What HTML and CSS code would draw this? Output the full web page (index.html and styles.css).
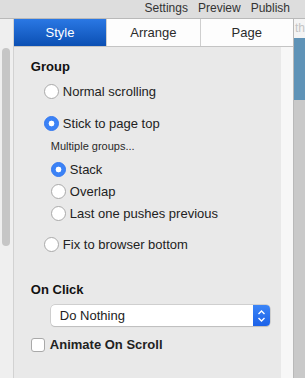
FILE: index.html
```html
<!DOCTYPE html>
<html lang="en">
<head>
  <meta charset="UTF-8">
  <title>Inspector</title>
  <link rel="stylesheet" href="styles.css">
</head>
<body>
  <div class="topbar">
    <span>Settings</span>
    <span>Preview</span>
    <span>Publish</span>
  </div>

  <div class="main">
    <div class="gutter">
      <div class="thumb"></div>
    </div>

    <div class="inspector">
      <div class="tabs">
        <div class="tab active">Style</div>
        <div class="tab">Arrange</div>
        <div class="tab">Page</div>
      </div>

      <div class="body">
        <div class="panel">
          <h2>Group</h2>
          <label class="radio"><span class="dot"></span>Normal scrolling</label>
          <label class="radio sticky"><span class="dot on"></span>Stick to page top</label>

          <div class="sub">
            <div class="hint">Multiple groups...</div>
            <label class="radio tight"><span class="dot on"></span>Stack</label>
            <label class="radio tight"><span class="dot"></span>Overlap</label>
            <label class="radio tight"><span class="dot"></span>Last one pushes previous</label>
          </div>

          <label class="radio bottom"><span class="dot"></span>Fix to browser bottom</label>

          <h2 class="onclick">On Click</h2>
          <div class="select">
            <span>Do Nothing</span>
            <span class="stepper">
              <svg width="9" height="14" viewBox="0 0 9 14">
                <path d="M1.5 5 L4.5 2 L7.5 5 M1.5 9 L4.5 12 L7.5 9" fill="none" stroke="#fff" stroke-width="1.4"/>
              </svg>
            </span>
          </div>

          <label class="check"><span class="box"></span>Animate On Scroll</label>
        </div>
        <div class="strip"></div>
      </div>
    </div>

    <div class="outside">
      <div class="peek">th</div>
      <div class="blue"></div>
      <div class="grey"></div>
    </div>
  </div>
</body>
</html>
```

FILE: styles.css
```css
* {
  margin: 0;
  padding: 0;
  box-sizing: border-box;
}

body {
  width: 305px;
  height: 378px;
  overflow: hidden;
  font-family: "Liberation Sans", Arial, sans-serif;
  font-size: 13px;
  color: #1e1e1e;
  background: #e9e9e9;
}

.topbar {
  height: 19px;
  background: #dddddd;
  border-bottom: 1px solid #b9b9b9;
  display: flex;
  justify-content: flex-end;
  gap: 10px;
  padding-right: 15px;
  font-size: 12px;
  line-height: 17px;
  color: #333;
}

.main {
  display: flex;
  height: 359px;
}

.gutter {
  width: 14px;
  background: #efefef;
  border-right: 1px solid #d2d2d2;
  padding: 29px 0 0 2px;
}

.thumb {
  width: 8px;
  height: 198px;
  background: #c6c6c6;
  border-radius: 4px;
}

.inspector {
  width: 284px;
  display: flex;
  flex-direction: column;
  border-right: 1px solid #b9b9b9;
}

.tabs {
  display: flex;
  height: 28px;
  border-bottom: 1px solid #c4c4c4;
  background: #fdfdfd;
}

.tab {
  flex: 1;
  text-align: center;
  line-height: 27px;
  color: #2b2b2b;
  border-left: 1px solid #cfcfcf;
}

.tab:first-child {
  border-left: none;
}

.tab.active {
  background: linear-gradient(#2a78e4, #0b4fb3);
  color: #fff;
}

.body {
  flex: 1;
  display: flex;
}

.panel {
  flex: 1;
  background: #e9e9e9;
  padding: 12px 0 0 17px;
}

.strip {
  width: 12px;
  background: #f7f7f7;
}

h2 {
  font-size: 13px;
  font-weight: bold;
  color: #111;
  line-height: 16px;
}

.radio {
  display: flex;
  align-items: center;
  gap: 4px;
  height: 20px;
  margin: 6px 0 0 13px;
  color: #222;
}

.dot {
  width: 15px;
  height: 15px;
  border-radius: 50%;
  background: #fff;
  border: 1px solid #a9a9a9;
  display: inline-block;
}

.dot.on {
  background: #3b82f6 radial-gradient(circle, #fff 2.6px, transparent 3.2px);
  border-color: #3478f0;
}

.radio.sticky {
  margin-top: 12px;
}

.sub {
  padding-left: 20px;
  margin-top: 6px;
}

.hint {
  font-size: 11px;
  color: #2a2a2a;
  line-height: 14px;
}

.radio.tight {
  margin: 2px 0 0 0;
  height: 20px;
}

.sub .radio.tight:first-of-type {
  margin-top: 6px;
}

.radio.bottom {
  margin-top: 11px;
}

.onclick {
  margin-top: 28px;
}

.select {
  display: flex;
  align-items: center;
  justify-content: space-between;
  width: 219px;
  height: 21px;
  margin: 7px 0 0 20px;
  padding-left: 9px;
  background: #fff;
  border-radius: 4px;
  box-shadow: 0 0 0 0.5px #b5b5b5, 0 1px 1px rgba(0, 0, 0, 0.15);
  color: #222;
}

.stepper {
  width: 17px;
  height: 21px;
  background: linear-gradient(#3c85f7, #1c62e8);
  border-radius: 0 4px 4px 0;
  display: flex;
  align-items: center;
  justify-content: center;
}

.check {
  display: flex;
  align-items: center;
  gap: 5px;
  margin-top: 11px;
  font-weight: bold;
  color: #222;
}

.box {
  width: 14px;
  height: 14px;
  background: #fff;
  border: 1px solid #a9a9a9;
  border-radius: 3px;
}

.outside {
  flex: 1;
  display: flex;
  flex-direction: column;
}

.peek {
  height: 19px;
  background: #f4f4f4;
  color: #c4c4c4;
  font-size: 12px;
  line-height: 19px;
  padding-left: 1px;
  overflow: hidden;
}

.blue {
  height: 62px;
  background: #5f93b7;
}

.grey {
  flex: 1;
  background: #c9c9c9;
}
```
